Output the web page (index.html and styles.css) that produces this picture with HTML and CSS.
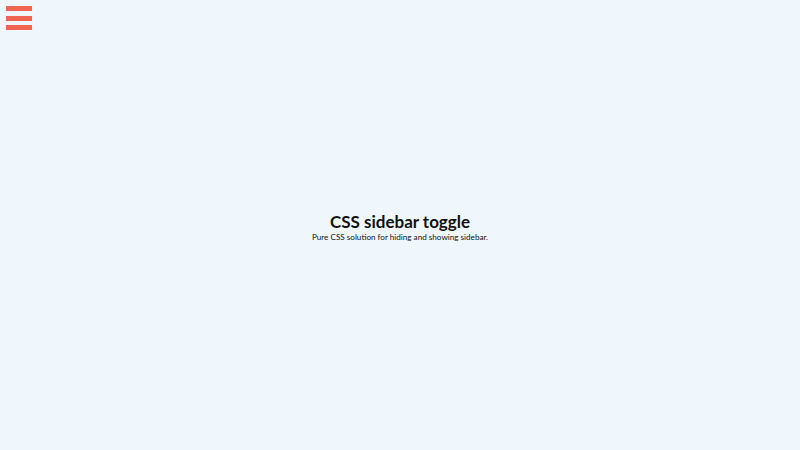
FILE: index.html
```html
<!DOCTYPE html>
<html>
<head>
<meta charset="utf-8">
<link rel="stylesheet" href="styles.css">
</head>
<body>
<div class="toggle" aria-label="menu">
  <span class="bar"></span>
  <span class="bar"></span>
  <span class="bar"></span>
</div>
<main class="content">
  <h1 class="title">CSS sidebar toggle</h1>
  <p class="subtitle">Pure CSS solution for hiding and showing sidebar.</p>
</main>
</body>
</html>
```
FILE: styles.css
```css
html, body {
  margin: 0;
  padding: 0;
  height: 100%;
}
body {
  background: #eff7fd;
  font-family: "Lato", "Open Sans", sans-serif;
  color: #111;
  overflow: hidden;
}
.toggle {
  position: absolute;
  top: 6px;
  left: 6px;
  width: 26px;
  display: flex;
  flex-direction: column;
  gap: 4.5px;
}
.bar {
  display: block;
  height: 5px;
  background: #f0654f;
}
.content {
  height: 100%;
  display: flex;
  flex-direction: column;
  align-items: center;
  justify-content: center;
  padding-top: 4px;
  box-sizing: border-box;
}
.title {
  margin: 0;
  font-size: 17px;
  font-weight: 700;
  line-height: 20px;
}
.subtitle {
  margin: 0;
  font-size: 8.15px;
  line-height: 11px;
}
```
